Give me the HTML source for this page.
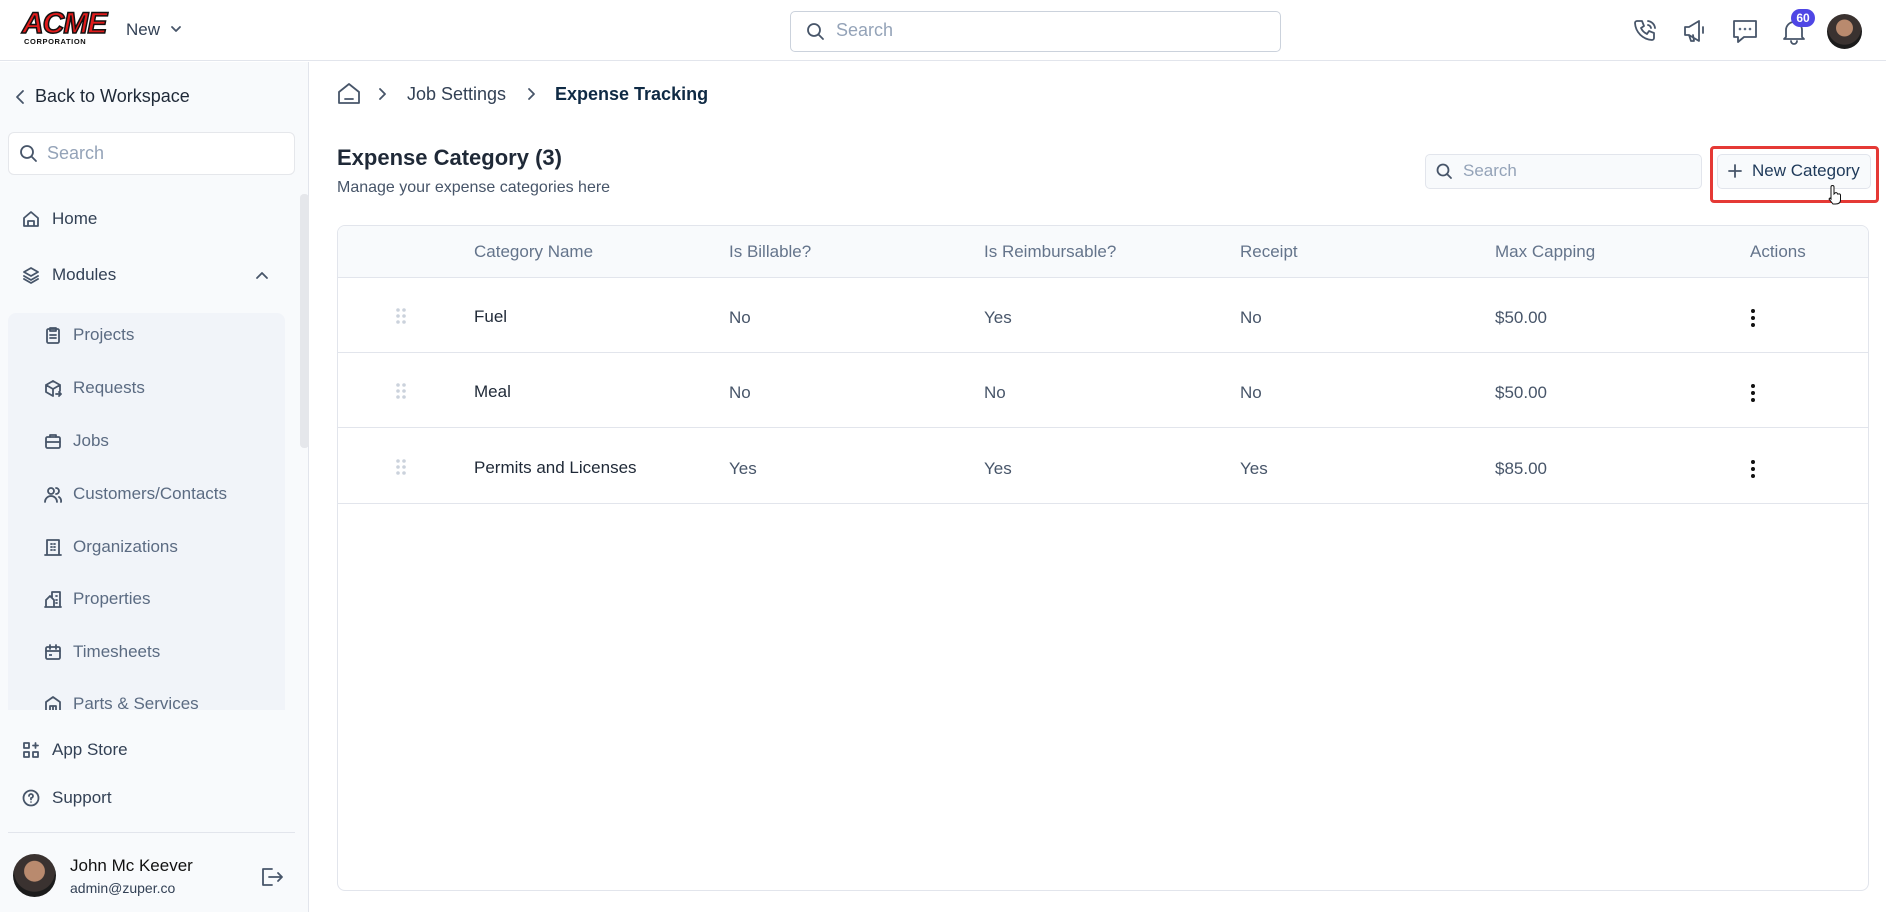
<!DOCTYPE html>
<html><head><meta charset="utf-8"><style>
*{box-sizing:border-box;margin:0;padding:0}
body{width:1886px;height:912px;overflow:hidden;font-family:"Liberation Sans",sans-serif;background:#fff;position:relative;color:#1f2937}
.abs{position:absolute}
.hdr{left:0;top:0;width:1886px;height:61px;border-bottom:1px solid #e2e5ec;background:#fff}
.side{left:0;top:62px;width:309px;height:850px;background:#f8fafc;border-right:1px solid #e2e5ec}
.ic{stroke:#475569;fill:none;stroke-width:1.8;stroke-linecap:round;stroke-linejoin:round}
.si{position:absolute;left:22px;font-size:17px;color:#334155;display:flex;align-items:center;gap:12px}
.sub{position:absolute;left:36px;font-size:17px;color:#5b6b82;display:flex;align-items:center;gap:11px}
.th{position:absolute;top:242px;font-size:17px;color:#64748b}
.td{position:absolute;font-size:17px;color:#475569}
.dots{position:absolute;width:4px}
.dots i{display:block;width:4px;height:4px;background:#111;border-radius:50%;margin-bottom:3px}
.grip{position:absolute;width:10px;height:16px}
</style></head><body>
<div class="abs hdr">
 <div class="abs" style="left:22px;top:11px;font-family:'Liberation Sans';font-weight:900;font-size:30px;color:#e01b1b;letter-spacing:-1px;line-height:26px;-webkit-text-stroke:1.5px #111;font-style:italic">ACME</div>
 <div class="abs" style="left:24px;top:37px;font-weight:700;font-size:7.5px;color:#111;letter-spacing:0.6px">CORPORATION</div>
 <div class="abs" style="left:126px;top:20px;font-size:17px;color:#334155">New</div>
 <svg class="abs" style="left:170px;top:24px" width="12" height="10"><path d="M2 3l4 4 4-4" class="ic" stroke-width="1.6"/></svg>
 <div class="abs" style="left:790px;top:11px;width:491px;height:41px;border:1px solid #cbd2dc;border-radius:5px"></div>
 <svg class="abs" style="left:806px;top:22px" width="20" height="20"><circle cx="8" cy="8" r="6" class="ic" stroke="#64748b"/><path d="M13 13l4 4" class="ic" stroke="#64748b"/></svg>
 <div class="abs" style="left:836px;top:20px;font-size:18px;color:#94a3b8">Search</div>
 <svg class="abs" style="left:1632px;top:17px" width="28" height="28"><path d="M5 4h5l2 5-3 2a12 12 0 0 0 6 6l2-3 5 2v5a2 2 0 0 1-2 2A18 18 0 0 1 3 6a2 2 0 0 1 2-2M16 4a8 8 0 0 1 7 7M16 8a4 4 0 0 1 3 3" class="ic" stroke="#5b6b82" stroke-width="2"/></svg>
 <svg class="abs" style="left:1681px;top:17px" width="28" height="28"><path d="M4 10h4l10-6v20L8 18H4zM8 18l2 6h3l-1-6M22 10v6" class="ic" stroke="#5b6b82" stroke-width="2"/></svg>
 <svg class="abs" style="left:1730px;top:17px" width="30" height="28"><path d="M4 4h22v16H14l-6 5v-5H4z" class="ic" stroke="#5b6b82" stroke-width="2"/><circle cx="10" cy="12" r="1.3" fill="#5b6b82"/><circle cx="15" cy="12" r="1.3" fill="#5b6b82"/><circle cx="20" cy="12" r="1.3" fill="#5b6b82"/></svg>
 <svg class="abs" style="left:1780px;top:17px" width="28" height="28"><path d="M6 20V13a8 8 0 0 1 16 0v7l2 2H4zM11 24a3 3 0 0 0 6 0" class="ic" stroke="#5b6b82" stroke-width="2"/></svg>
 <div class="abs" style="left:1791px;top:9px;width:24px;height:18px;border-radius:9px;background:#4f46e5;color:#fff;font-size:12px;font-weight:700;text-align:center;line-height:18px">60</div>
 <div class="abs" style="left:1827px;top:14px;width:35px;height:35px;border-radius:50%;background:radial-gradient(circle at 50% 40%,#b98a6e 0 30%,#3a3230 32% 60%,#1b1b1b 62%)"></div>
</div>
<div class="abs side">
 <svg class="abs" style="left:14px;top:27px" width="12" height="16"><path d="M9 2L3 8l6 6" class="ic" stroke="#1f2937" stroke-width="2"/></svg>
 <div class="abs" style="left:35px;top:24px;font-size:18px;color:#1f2937">Back to Workspace</div>
 <div class="abs" style="left:8px;top:70px;width:287px;height:43px;background:#fff;border:1px solid #e5e7eb;border-radius:6px"></div>
 <svg class="abs" style="left:19px;top:82px" width="20" height="20"><circle cx="8" cy="8" r="6" class="ic" stroke="#94a3b8"/><path d="M13 13l4 4" class="ic" stroke="#94a3b8"/></svg>
 <div class="abs" style="left:47px;top:81px;font-size:18px;color:#94a3b8">Search</div>
 <div class="abs" style="left:300px;top:132px;width:9px;height:254px;background:#e5e7eb;border-radius:4px"></div>
 <div class="si" style="top:147px"><svg width="18" height="18"><path d="M2 8l7-6 7 6v8H2zM6 16v-5h6v5" class="ic" stroke="#334155"/></svg>Home</div>
 <div class="si" style="top:203px"><svg width="18" height="18"><path d="M9 2l7 4-7 4-7-4zM2 10l7 4 7-4M2 13l7 4 7-4" class="ic" stroke="#334155" stroke-width="1.6"/></svg>Modules</div>
 <svg class="abs" style="left:255px;top:208px" width="14" height="10"><path d="M2 8l5-5 5 5" class="ic" stroke="#334155" stroke-width="1.8"/></svg>
 <div class="abs" style="left:8px;top:251px;width:277px;height:397px;background:#f1f4f9;border-radius:8px 8px 0 0;overflow:hidden">
  <div class="sub" style="top:12px"><svg width="18" height="18"><rect x="3" y="3" width="12" height="14" rx="1.5" class="ic" stroke="#5b6b82"/><path d="M6 2h6v3H6zM6 9h6M6 12h6" class="ic" stroke="#5b6b82"/></svg>Projects</div>
  <div class="sub" style="top:65px"><svg width="18" height="18"><path d="M9 2l7 4v6M2 6l7-4M2 6v7l7 4M2 6l7 4 7-4M9 10v7M12 15h5M15 13l2 2-2 2" class="ic" stroke="#5b6b82" stroke-width="1.6"/></svg>Requests</div>
  <div class="sub" style="top:118px"><svg width="18" height="18"><rect x="2" y="5" width="14" height="11" rx="1.5" class="ic" stroke="#5b6b82"/><path d="M6 5V3h6v2M2 10h14" class="ic" stroke="#5b6b82"/></svg>Jobs</div>
  <div class="sub" style="top:171px"><svg width="18" height="18"><circle cx="7" cy="6" r="3" class="ic" stroke="#5b6b82"/><path d="M1 17a6 6 0 0 1 12 0M12 3a3 3 0 0 1 0 6M15 12a5 5 0 0 1 2 5" class="ic" stroke="#5b6b82"/></svg>Customers/Contacts</div>
  <div class="sub" style="top:224px"><svg width="18" height="18"><path d="M3 17V2h12v15M1 17h16M7 6h1M10 6h1M7 9h1M10 9h1M7 12h1M10 12h1" class="ic" stroke="#5b6b82"/></svg>Organizations</div>
  <div class="sub" style="top:276px"><svg width="18" height="18"><path d="M2 17V10l4-4 4 4v7zM8 8V2h8v15h-6M1 17h16M12 6h1M12 10h1M12 13h1" class="ic" stroke="#5b6b82"/></svg>Properties</div>
  <div class="sub" style="top:329px"><svg width="18" height="18"><rect x="2" y="4" width="14" height="12" rx="1.5" class="ic" stroke="#5b6b82"/><path d="M6 2v4M12 2v4M2 8h14" class="ic" stroke="#5b6b82"/><rect x="5" y="11" width="3" height="2" fill="#5b6b82"/></svg>Timesheets</div>
  <div class="sub" style="top:381px"><svg width="18" height="18"><path d="M2 17V7l7-5 7 5v10M6 17v-6h6v6M9 11v6" class="ic" stroke="#5b6b82"/></svg>Parts &amp; Services</div>
 </div>
 <div class="si" style="top:678px"><svg width="18" height="18"><rect x="2" y="2" width="5" height="5" class="ic" stroke="#334155"/><rect x="2" y="11" width="5" height="5" class="ic" stroke="#334155"/><rect x="11" y="11" width="5" height="5" class="ic" stroke="#334155"/><path d="M13.5 2v5M11 4.5h5" class="ic" stroke="#334155"/></svg>App Store</div>
 <div class="si" style="top:726px"><svg width="18" height="18"><circle cx="9" cy="9" r="7.5" class="ic" stroke="#334155"/><path d="M7 7a2 2 0 1 1 2 2v1.5" class="ic" stroke="#334155"/><circle cx="9" cy="13" r="0.8" fill="#334155"/></svg>Support</div>
 <div class="abs" style="left:8px;top:770px;width:287px;height:1px;background:#e2e5ec"></div>
 <div class="abs" style="left:13px;top:792px;width:43px;height:43px;border-radius:50%;background:radial-gradient(circle at 50% 40%,#b98a6e 0 30%,#3a3230 32% 60%,#1b1b1b 62%)"></div>
 <div class="abs" style="left:70px;top:794px;font-size:17px;color:#111">John Mc Keever</div>
 <div class="abs" style="left:70px;top:818px;font-size:14px;color:#334155">admin@zuper.co</div>
 <svg class="abs" style="left:260px;top:804px" width="24" height="22"><path d="M12 3H3v16h9M9 11h13M18 7l4 4-4 4" class="ic" stroke="#64748b" stroke-width="2"/></svg>
</div>
<svg class="abs" style="left:337px;top:82px" width="24" height="24"><path d="M2 10l10-8 10 8v11H2zM8 17h8" class="ic" stroke="#475569" stroke-width="2"/></svg>
<svg class="abs" style="left:378px;top:87px" width="10" height="14"><path d="M2 2l5 5-5 5" class="ic" stroke="#b0b8c4" stroke-width="1.8"/></svg>
<div class="abs" style="left:407px;top:84px;font-size:18px;color:#334155">Job Settings</div>
<svg class="abs" style="left:527px;top:87px" width="10" height="14"><path d="M2 2l5 5-5 5" class="ic" stroke="#b0b8c4" stroke-width="1.8"/></svg>
<div class="abs" style="left:555px;top:84px;font-size:18px;color:#0f2a44;font-weight:700">Expense Tracking</div>
<div class="abs" style="left:337px;top:145px;font-size:22px;color:#1f2937;font-weight:700">Expense Category (3)</div>
<div class="abs" style="left:337px;top:179px;font-size:16px;color:#475569">Manage your expense categories here</div>
<div class="abs" style="left:1425px;top:154px;width:277px;height:35px;background:#f8fafc;border:1px solid #e2e5ec;border-radius:5px"></div>
<svg class="abs" style="left:1436px;top:163px" width="18" height="18"><circle cx="7" cy="7" r="5.5" class="ic" stroke="#a3adbb" stroke-width="1.6"/><path d="M11 11l4 4" class="ic" stroke="#a3adbb" stroke-width="1.6"/></svg>
<div class="abs" style="left:1463px;top:161px;font-size:17px;color:#94a3b8">Search</div>
<div class="abs" style="left:1710px;top:146px;width:169px;height:57px;border:3px solid #e53935;border-radius:4px"></div>
<div class="abs" style="left:1717px;top:154px;width:154px;height:35px;background:#f8fafc;border:1px solid #e2e5ec;border-radius:5px"></div>
<svg class="abs" style="left:1728px;top:164px" width="14" height="14"><path d="M7 1v12M1 7h12" class="ic" stroke="#475569" stroke-width="1.6"/></svg>
<div class="abs" style="left:1752px;top:161px;font-size:17px;color:#1f3a5a">New Category</div>
<svg class="abs" style="left:1826px;top:184px" width="16" height="22"><path d="M5 12V3a1.5 1.5 0 0 1 3 0v7l1-1a1.5 1.5 0 0 1 2.5 1l1 0a1.4 1.4 0 0 1 2 1v5c0 3-2 4-5 4H7l-4-5 1-1 1 1z" fill="#fff" stroke="#111" stroke-width="1"/></svg>
<div class="abs" style="left:337px;top:225px;width:1532px;height:666px;border:1px solid #e2e5ec;border-radius:8px;overflow:hidden">
 <div style="height:52px;background:#f8fafc;border-bottom:1px solid #e2e5ec"></div>
 <div style="height:75px;border-bottom:1px solid #e2e5ec"></div>
 <div style="height:75px;border-bottom:1px solid #e2e5ec"></div>
 <div style="height:76px;border-bottom:1px solid #e2e5ec"></div>
</div>
<div class="th" style="left:474px">Category Name</div>
<div class="th" style="left:729px">Is Billable?</div>
<div class="th" style="left:984px">Is Reimbursable?</div>
<div class="th" style="left:1240px">Receipt</div>
<div class="th" style="left:1495px">Max Capping</div>
<div class="th" style="left:1750px">Actions</div>

<svg class="grip" style="left:396px;top:308px"><g fill="#cbd2dc"><circle cx="2" cy="2" r="1.8"/><circle cx="8" cy="2" r="1.8"/><circle cx="2" cy="8" r="1.8"/><circle cx="8" cy="8" r="1.8"/><circle cx="2" cy="14" r="1.8"/><circle cx="8" cy="14" r="1.8"/></g></svg>
<div class="td" style="left:474px;top:307px;color:#1f2937">Fuel</div>
<div class="td" style="left:729px;top:308px">No</div>
<div class="td" style="left:984px;top:308px">Yes</div>
<div class="td" style="left:1240px;top:308px">No</div>
<div class="td" style="left:1495px;top:308px">$50.00</div>
<div class="dots" style="left:1751px;top:309px"><i></i><i></i><i></i></div>

<svg class="grip" style="left:396px;top:383px"><g fill="#cbd2dc"><circle cx="2" cy="2" r="1.8"/><circle cx="8" cy="2" r="1.8"/><circle cx="2" cy="8" r="1.8"/><circle cx="8" cy="8" r="1.8"/><circle cx="2" cy="14" r="1.8"/><circle cx="8" cy="14" r="1.8"/></g></svg>
<div class="td" style="left:474px;top:382px;color:#1f2937">Meal</div>
<div class="td" style="left:729px;top:383px">No</div>
<div class="td" style="left:984px;top:383px">No</div>
<div class="td" style="left:1240px;top:383px">No</div>
<div class="td" style="left:1495px;top:383px">$50.00</div>
<div class="dots" style="left:1751px;top:384px"><i></i><i></i><i></i></div>

<svg class="grip" style="left:396px;top:459px"><g fill="#cbd2dc"><circle cx="2" cy="2" r="1.8"/><circle cx="8" cy="2" r="1.8"/><circle cx="2" cy="8" r="1.8"/><circle cx="8" cy="8" r="1.8"/><circle cx="2" cy="14" r="1.8"/><circle cx="8" cy="14" r="1.8"/></g></svg>
<div class="td" style="left:474px;top:458px;color:#1f2937">Permits and Licenses</div>
<div class="td" style="left:729px;top:459px">Yes</div>
<div class="td" style="left:984px;top:459px">Yes</div>
<div class="td" style="left:1240px;top:459px">Yes</div>
<div class="td" style="left:1495px;top:459px">$85.00</div>
<div class="dots" style="left:1751px;top:460px"><i></i><i></i><i></i></div>
</body></html>
